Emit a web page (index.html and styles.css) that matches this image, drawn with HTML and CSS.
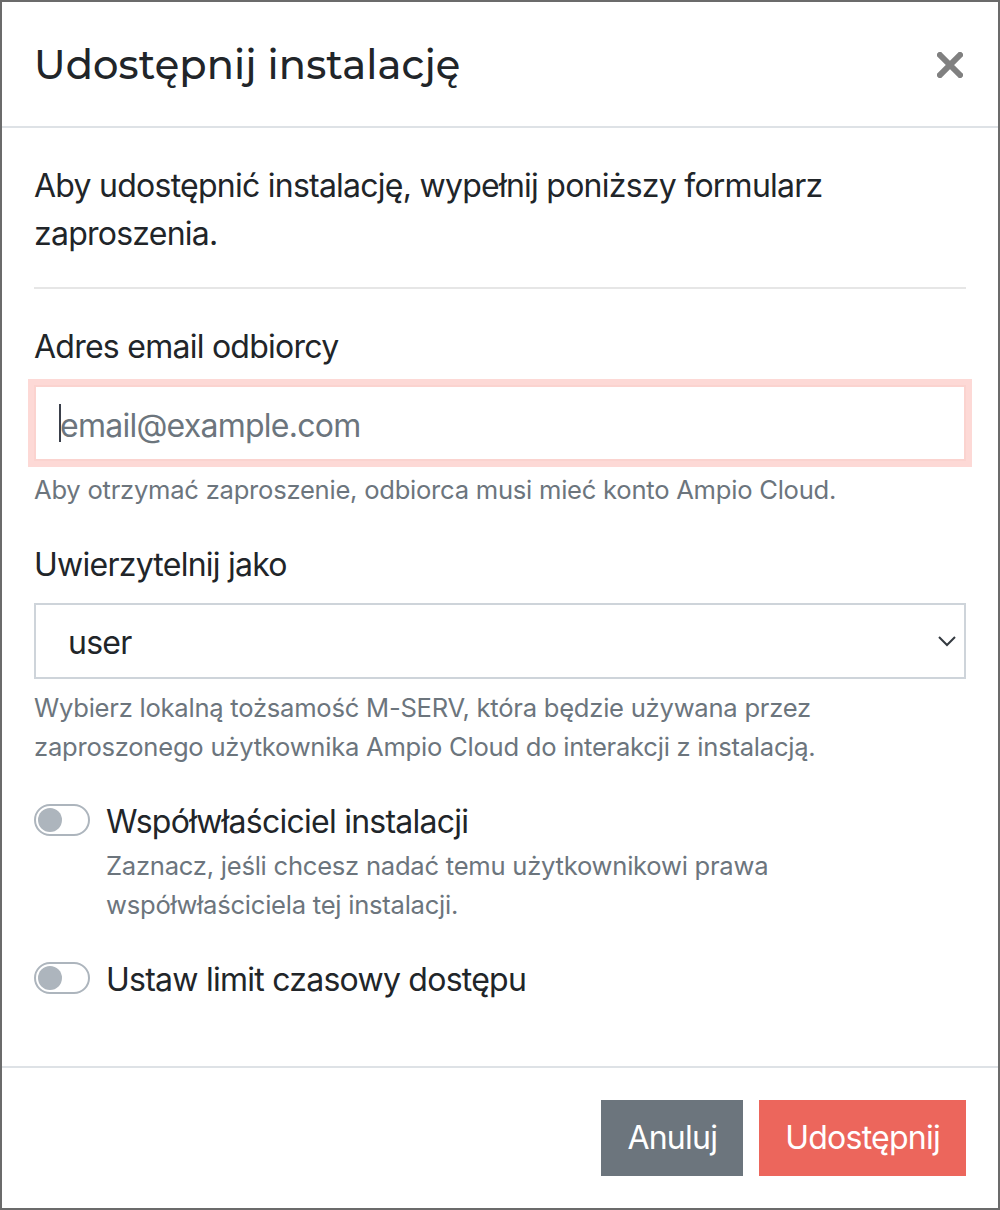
FILE: index.html
```html
<!DOCTYPE html>
<html lang="pl">
<head>
<meta charset="utf-8">
<title>Udostępnij instalację</title>
<link rel="stylesheet" href="styles.css">
</head>
<body>
<div class="modal">
  <div class="modal-header">
    <h5 class="modal-title">Udostępnij instalację</h5>
    <button class="close" type="button" aria-label="Zamknij">
      <svg width="26" height="26" viewBox="0 0 26 26"><path d="M3 3 L23 23 M23 3 L3 23" stroke="#808080" stroke-width="6" stroke-linecap="square" fill="none"/></svg>
    </button>
  </div>
  <div class="modal-body">
    <p class="intro">Aby udostępnić instalację, wypełnij poniższy formularz zaproszenia.</p>
    <hr class="divider">
    <div class="form-group">
      <label class="label" for="email">Adres email odbiorcy</label>
      <div class="input-wrap">
        <input id="email" class="input input-focus" type="email" placeholder="email@example.com">
        <span class="caret"></span>
      </div>
      <small class="form-text">Aby otrzymać zaproszenie, odbiorca musi mieć konto Ampio Cloud.</small>
    </div>
    <div class="form-group">
      <label class="label" for="ident">Uwierzytelnij jako</label>
      <div class="select-wrap">
        <select id="ident" class="input select"><option>user</option></select>
        <svg class="chevron" width="18" height="11" viewBox="0 0 18 11"><path d="M1 1 L9 9 L17 1" stroke="#343a40" stroke-width="2" fill="none"/></svg>
      </div>
      <small class="form-text">Wybierz lokalną tożsamość M-SERV, która będzie używana przez zaproszonego użytkownika Ampio Cloud do interakcji z instalacją.</small>
    </div>
    <div class="form-group">
      <div class="switch">
        <span class="track"><span class="thumb"></span></span>
        <div class="switch-text">
          <div class="switch-label">Współwłaściciel instalacji</div>
          <small class="form-text tight">Zaznacz, jeśli chcesz nadać temu użytkownikowi prawa współwłaściciela tej instalacji.</small>
        </div>
      </div>
    </div>
    <div class="form-group last">
      <div class="switch">
        <span class="track"><span class="thumb"></span></span>
        <div class="switch-text">
          <div class="switch-label">Ustaw limit czasowy dostępu</div>
        </div>
      </div>
    </div>
  </div>
  <div class="modal-footer">
    <button class="btn btn-secondary" type="button">Anuluj</button>
    <button class="btn btn-primary" type="button">Udostępnij</button>
  </div>
</div>
</body>
</html>
```
FILE: styles.css
```css
* { box-sizing: border-box; }
html, body { margin: 0; padding: 0; background: #fff; }
body {
  font-family: Inter, "Liberation Sans", sans-serif;
  color: #212529;
  font-size: 32px;
  line-height: 48px;
  letter-spacing: -0.75px;
}
.modal {
  width: 1000px;
  height: 1210px;
  border: 2px solid #6b6b6b;
  display: flex;
  flex-direction: column;
  background: #fff;
}
.modal-header {
  display: flex;
  align-items: flex-start;
  justify-content: space-between;
  padding: 33px 32px 31px;
  border-bottom: 2px solid #dee2e6;
}
.modal-title {
  margin: 0;
  font-family: Montserrat, Inter, "Noto Sans", sans-serif;
  font-weight: 500;
  font-size: 40px;
  line-height: 60px;
  letter-spacing: 0.1px;
}
.close {
  border: 0;
  background: transparent;
  padding: 0;
  margin: 17px 3px 0 0;
  width: 26px;
  height: 26px;
  display: block;
}
.close svg { display: block; }
.modal-body {
  padding: 34px 32px 30px;
  flex: 1;
}
.intro { margin: 0; }
.divider {
  border: 0;
  border-top: 2px solid #e6e6e6;
  margin: 29px 0 34px;
}
.form-group { margin-bottom: 32px; }
.form-group.last { margin-bottom: 0; }
.label { display: block; margin-bottom: 14px; }
.input-wrap, .select-wrap { position: relative; }
.input {
  display: block;
  width: 100%;
  height: 76px;
  padding: 14px 24px 10px;
  font-family: inherit;
  font-size: 32px;
  line-height: 48px;
  letter-spacing: -0.75px;
  color: #495057;
  background: #fff;
  border: 2px solid #ced4da;
  border-radius: 0;
  outline: none;
}
.input::placeholder { color: #6c757d; opacity: 1; }
.input-focus {
  border-color: #fbd3cf;
  box-shadow: 0 0 0 6px #fdd9d6;
}
.caret {
  position: absolute;
  left: 25px;
  top: 19px;
  width: 2px;
  height: 38px;
  background: #3a3f4a;
}
.select {
  -webkit-appearance: none;
  appearance: none;
  padding-left: 32px;
  color: #212529;
}
.chevron {
  position: absolute;
  right: 10px;
  top: 33px;
}
.form-text {
  display: block;
  margin-top: 10px;
  font-size: 25.6px;
  line-height: 38.4px;
  color: #6c757d;
  letter-spacing: -0.25px;
}
.form-text.tight { margin-top: 1px; }
.switch {
  display: flex;
  align-items: flex-start;
}
.track {
  flex: none;
  position: relative;
  width: 56px;
  height: 32px;
  margin-top: 6px;
  margin-right: 16px;
  border: 2px solid #adb5bd;
  border-radius: 16px;
  background: #fff;
}
.thumb {
  position: absolute;
  left: 2px;
  top: 2px;
  width: 24px;
  height: 24px;
  border-radius: 50%;
  background: #adb5bd;
}
.switch-label { line-height: 48px; }
.modal-footer {
  display: flex;
  justify-content: flex-end;
  align-items: center;
  padding: 24px;
  border-top: 2px solid #dee2e6;
}
.btn {
  margin: 8px;
  height: 76px;
  padding: 12px 24px;
  font-family: inherit;
  font-size: 32px;
  line-height: 48px;
  letter-spacing: -0.75px;
  color: #fff;
  border: 2px solid transparent;
  border-radius: 0;
}
.btn-secondary { background: #6c757d; border-color: #6c757d; }
.btn-primary { background: #ec665c; border-color: #ec665c; }
```
